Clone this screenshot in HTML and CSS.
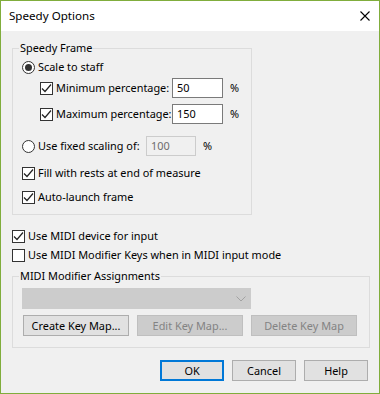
FILE: index.html
```html
<!DOCTYPE html>
<html lang="en">
<head>
    <meta charset="UTF-8">
    <title>Speedy Options</title>
    <link rel="stylesheet" href="styles.css">
</head>
<body>
    <div class="dialog">
        <div class="titlebar">
            <span class="title">Speedy Options</span>
            <svg class="close" width="10" height="10" viewBox="0 0 10 10">
                <path d="M0.5 0.5 L9.5 9.5 M9.5 0.5 L0.5 9.5" stroke="#000" stroke-width="1.1" fill="none"/>
            </svg>
        </div>

        <div class="content">
            <fieldset class="group frame-group">
                <legend>Speedy Frame</legend>

                <div class="row r1">
                    <span class="radio on"></span>
                    <span class="text">Scale to staff</span>
                </div>

                <div class="row sub r2">
                    <span class="check"><svg width="11" height="11" viewBox="0 0 11 11"><path d="M1 5.5 L4 8.5 L10 1.5" stroke="#222" stroke-width="1.2" fill="none"/></svg></span>
                    <span class="text pct-label">Minimum percentage:</span>
                    <span class="field">50</span>
                    <span class="unit">%</span>
                </div>

                <div class="row sub r3">
                    <span class="check"><svg width="11" height="11" viewBox="0 0 11 11"><path d="M1 5.5 L4 8.5 L10 1.5" stroke="#222" stroke-width="1.2" fill="none"/></svg></span>
                    <span class="text pct-label">Maximum percentage:</span>
                    <span class="field">150</span>
                    <span class="unit">%</span>
                </div>

                <div class="row r4">
                    <span class="radio"></span>
                    <span class="text fixed-label">Use fixed scaling of:</span>
                    <span class="field small disabled">100</span>
                    <span class="unit">%</span>
                </div>

                <div class="row r5">
                    <span class="check"><svg width="11" height="11" viewBox="0 0 11 11"><path d="M1 5.5 L4 8.5 L10 1.5" stroke="#222" stroke-width="1.2" fill="none"/></svg></span>
                    <span class="text">Fill with rests at end of measure</span>
                </div>

                <div class="row r6">
                    <span class="check"><svg width="11" height="11" viewBox="0 0 11 11"><path d="M1 5.5 L4 8.5 L10 1.5" stroke="#222" stroke-width="1.2" fill="none"/></svg></span>
                    <span class="text">Auto-launch frame</span>
                </div>
            </fieldset>

            <div class="row midi-device">
                <span class="check"><svg width="11" height="11" viewBox="0 0 11 11"><path d="M1 5.5 L4 8.5 L10 1.5" stroke="#222" stroke-width="1.2" fill="none"/></svg></span>
                <span class="text">Use MIDI device for input</span>
            </div>

            <div class="row">
                <span class="check"></span>
                <span class="text">Use MIDI Modifier Keys when in MIDI input mode</span>
            </div>

            <fieldset class="group midi-group">
                <legend>MIDI Modifier Assignments</legend>

                <div class="combo">
                    <svg width="10" height="6" viewBox="0 0 10 6">
                        <path d="M0.5 0.5 L5 5 L9.5 0.5" stroke="#a2a2a2" stroke-width="1" fill="none"/>
                    </svg>
                </div>

                <div class="map-buttons">
                    <button class="btn">Create Key Map...</button>
                    <button class="btn" disabled>Edit Key Map...</button>
                    <button class="btn" disabled>Delete Key Map</button>
                </div>
            </fieldset>

            <div class="actions">
                <button class="btn default">OK</button>
                <button class="btn">Cancel</button>
                <button class="btn">Help</button>
            </div>
        </div>
    </div>
</body>
</html>
```

FILE: styles.css
```css
body {
    margin: 0;
    font-family: "Noto Sans", "Open Sans", sans-serif;
    font-size: 10.9px;
    color: #000;
    background-color: #f0f0f0;
}
.dialog {
    width: 380px;
    height: 394px;
    box-sizing: border-box;
    border: 1px solid #80ad3c;
    background-color: #f0f0f0;
    display: flex;
    flex-direction: column;
}
.titlebar {
    height: 30px;
    background-color: #ffffff;
    display: flex;
    align-items: center;
    justify-content: space-between;
    padding: 0 9px 0 8px;
}
.title {
    font-size: 11.6px;
    line-height: 16px;
}
.close {
    display: block;
}
.content {
    padding: 9px 11px 0 11px;
}
.group {
    margin: 0;
    box-sizing: border-box;
    border: 1px solid #dcdcdc;
    padding: 1px 9px 7px 9px;
}
.group legend {
    padding: 0 1px;
    margin-left: -3px;
    line-height: 16px;
}
.frame-group {
    width: 240px;
}
.row {
    display: flex;
    align-items: center;
    height: 20px;
    line-height: 16px;
    white-space: nowrap;
}
.sub {
    padding-left: 18px;
}
.r2 { margin-top: 1px; }
.r3 { margin-top: 6px; }
.r4 { margin-top: 12px; }
.r5 { margin-top: 7px; }
.r6 { margin-top: 4px; }
.text {
    margin-left: 3px;
}
.pct-label {
    width: 116px;
}
.fixed-label {
    width: 108px;
}
.check,
.radio {
    width: 13px;
    height: 13px;
    box-sizing: border-box;
    border: 1px solid #333333;
    background-color: #ffffff;
    display: flex;
    align-items: center;
    justify-content: center;
    flex-shrink: 0;
}
.check svg {
    display: block;
}
.radio {
    border-radius: 50%;
}
.radio.on::after {
    content: "";
    width: 7px;
    height: 7px;
    border-radius: 50%;
    background-color: #333333;
}
.field {
    width: 51px;
    height: 20px;
    box-sizing: border-box;
    border: 1px solid #7a7a7a;
    background-color: #ffffff;
    padding: 1px 4px;
    line-height: 16px;
}
.field.small {
    width: 50px;
}
.field.disabled {
    border-color: #cccccc;
    background-color: #f0f0f0;
    color: #6d6d6d;
}
.unit {
    margin-left: 7px;
}
.midi-device {
    margin-top: 11px;
    margin-bottom: -1px;
}
.midi-group {
    width: 358px;
    margin-top: 3px;
    padding: 4px 9px 11px 9px;
}
.combo {
    width: 229px;
    height: 21px;
    box-sizing: border-box;
    background-color: #cccccc;
    border: 1px solid #cccccc;
    display: flex;
    align-items: center;
    justify-content: flex-end;
    padding-right: 4px;
}
.combo svg {
    display: block;
}
.map-buttons {
    display: flex;
    gap: 8px;
    margin-top: 6px;
    margin-left: 1px;
}
.btn {
    height: 21px;
    box-sizing: border-box;
    border: 1px solid #adadad;
    background-color: #e1e1e1;
    font-family: "Noto Sans", "Open Sans", sans-serif;
    font-size: 10.9px;
    color: #000;
    padding: 0;
    line-height: 16px;
}
.map-buttons .btn {
    width: 106px;
}
.btn:disabled {
    background-color: #cccccc;
    border-color: #bfbfbf;
    color: #838383;
}
.actions {
    display: flex;
    justify-content: flex-end;
    gap: 8px;
    margin-top: 12px;
}
.actions .btn {
    width: 64px;
}
.btn.default {
    border: 2px solid #0078d7;
}
```
